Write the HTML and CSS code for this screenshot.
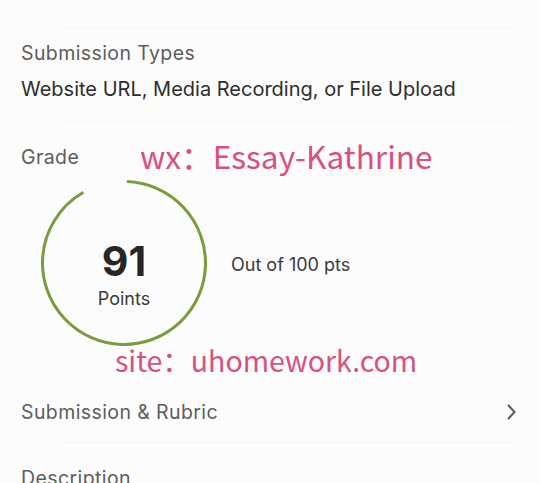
FILE: index.html
```html
<!DOCTYPE html>
<html lang="en">

<head>
    <meta charset="UTF-8">
    <meta name="viewport" content="width=device-width, initial-scale=1.0">
    <title>Assignment Details</title>
    <link rel="stylesheet" href="styles.css">
</head>

<body>
    <div class="page">
        <div class="divider"></div>

        <div class="section submission-types">
            <div class="label">Submission Types</div>
            <div class="value">Website URL, Media Recording, or File Upload</div>
        </div>

        <div class="divider"></div>

        <div class="section grade">
            <div class="label">Grade</div>
            <div class="grade-row">
                <div class="dial">
                    <svg width="170" height="170" viewBox="0 0 170 170">
                        <circle class="dial-arc" cx="85" cy="85" r="81.5" stroke-dasharray="466 512"
                            transform="rotate(-88 85 85)" />
                    </svg>
                    <div class="dial-text">
                        <div class="score">91</div>
                        <div class="score-unit">Points</div>
                    </div>
                </div>
                <div class="out-of">Out of 100 pts</div>
            </div>
            <div class="watermark wm-wx">wx：Essay-Kathrine</div>
            <div class="watermark wm-site">site：uhomework.com</div>
        </div>

        <div class="section link-row">
            <div class="label">Submission &amp; Rubric</div>
            <svg class="chevron" width="12" height="18" viewBox="0 0 12 18">
                <path d="M3 2 L9.5 9 L3 16" />
            </svg>
        </div>

        <div class="divider"></div>

        <div class="section description">
            <div class="label">Description</div>
        </div>
    </div>
</body>

</html>
```

FILE: styles.css
```css
body {
    margin: 0;
    background: #fcfcfc;
    font-family: Inter, "Liberation Sans", sans-serif;
    color: #333;
}

.page {
    padding-top: 27px;
}

.divider {
    height: 1px;
    background: #f4f4f4;
    margin: 0 26px 0 60px;
}

.section {
    position: relative;
    padding: 0 21px;
}

.label {
    font-size: 19.5px;
    line-height: 24px;
    letter-spacing: 0.4px;
    color: #5c5c5c;
}

.value {
    font-size: 20px;
    line-height: 24px;
    color: #2e2e2e;
}

.submission-types {
    padding-top: 13px;
    padding-bottom: 20px;
}

.submission-types .value {
    margin-top: 12px;
}

.grade {
    padding-top: 23px;
    padding-bottom: 34px;
}

.grade-row {
    display: flex;
    align-items: center;
    gap: 22px;
    margin-top: 9px;
    margin-left: 18px;
}

.dial {
    display: grid;
    width: 170px;
    height: 170px;
}

.dial svg,
.dial-text {
    grid-area: 1 / 1;
}

.dial-arc {
    fill: none;
    stroke: #7c9b3c;
    stroke-width: 3;
}

.dial-text {
    display: flex;
    flex-direction: column;
    align-items: center;
    justify-content: center;
    padding-top: 22px;
}

.score {
    font-size: 41px;
    font-weight: 700;
    line-height: 44px;
    color: #262626;
}

.score-unit {
    font-size: 18px;
    line-height: 22px;
    color: #3a3a3a;
    margin-top: 5px;
}

.out-of {
    font-size: 18px;
    color: #3a3a3a;
    margin-top: 2px;
}

.watermark {
    position: absolute;
    font-family: "Noto Sans CJK SC", sans-serif;
    line-height: 36px;
    color: #d9507f;
}

.wm-wx {
    left: 140px;
    top: 15px;
    font-size: 31.6px;
}

.wm-site {
    left: 115px;
    top: 220px;
    font-size: 28.5px;
}

.link-row {
    display: flex;
    align-items: center;
    justify-content: space-between;
    height: 60px;
}

.chevron {
    margin-right: 2px;
    fill: none;
    stroke: #5a5a5a;
    stroke-width: 2;
}

.description {
    padding-top: 23px;
}
```
